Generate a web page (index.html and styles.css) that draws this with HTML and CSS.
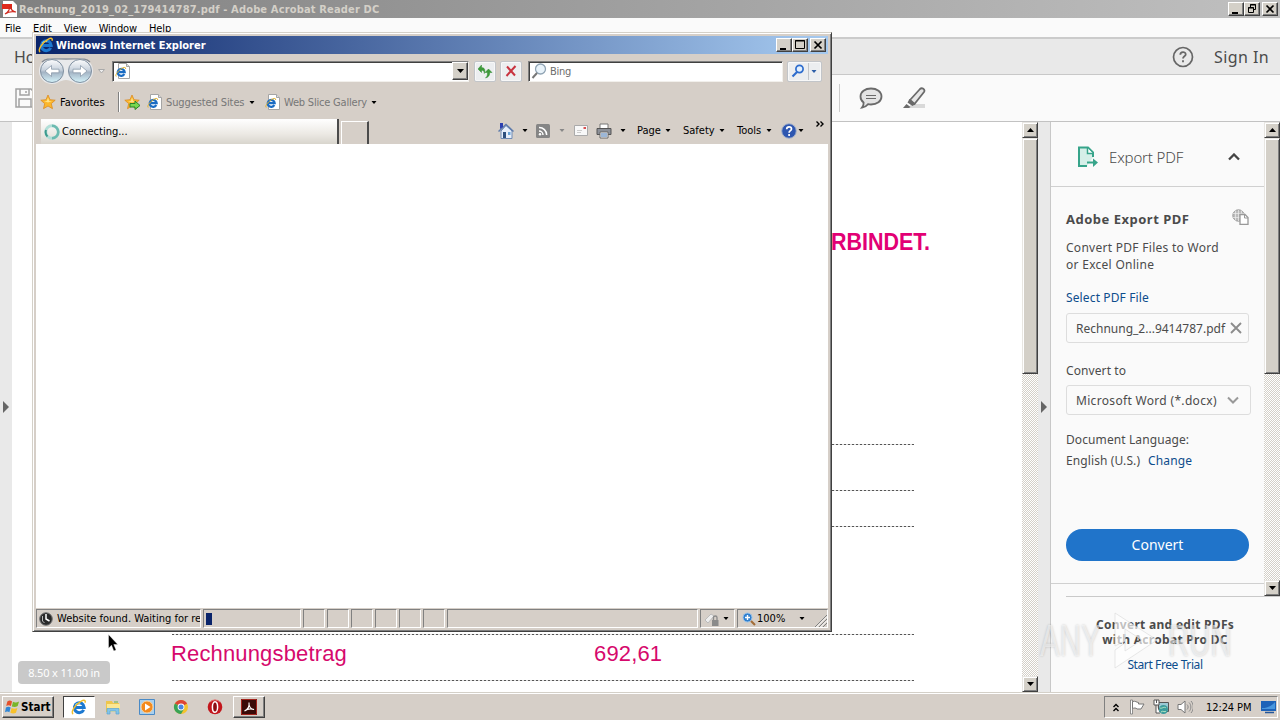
FILE: index.html
```html
<!DOCTYPE html>
<html lang="en">
<head>
    <meta charset="UTF-8">
    <meta name="viewport" content="width=device-width, initial-scale=1.0">
    <title>Desktop</title>
    <link rel="stylesheet" href="styles.css">
</head>
<body>
    <svg class="defs" width="0" height="0">
        <defs>
            <linearGradient id="orb" x1="0" y1="0" x2="0" y2="1">
                <stop offset="0" stop-color="#fdfdfe"/>
                <stop offset=".45" stop-color="#c9d3de"/>
                <stop offset=".55" stop-color="#a3b3c4"/>
                <stop offset="1" stop-color="#d5f3fa"/>
            </linearGradient>
            <symbol id="ie" viewBox="0 0 16 16">
                <path d="M12.700 10.900A4.900 4.900 0 1 1 13.200 8.500H4.500" fill="none" stroke="#1c78d0" stroke-width="3"/>
                <path d="M4.200 6.300a3.900 3.900 0 0 1 5-1.500" fill="none" stroke="#7fd0f8" stroke-width="1.200"/>
                <path d="M2.200 15C-.8 13.600 4 5.500 10 2.300c3.400-1.800 5-.9 4 1.500" fill="none" stroke="#f0bd2c" stroke-width="1.500"/>
            </symbol>
            <symbol id="iepage" viewBox="0 0 16 16">
                <path d="M3.500.5h8l3 3v12h-11z" fill="#fff" stroke="#a5a5a5"/>
                <path d="M11.500.5v3h3" fill="#ddd" stroke="#a5a5a5"/>
                <path d="M9.300 11.100A3.500 3.500 0 1 1 9.700 9.200H4" fill="none" stroke="#1b6cc3" stroke-width="2.200"/>
                <path d="M1.200 13.500C-.5 12 4 6.500 8 4.800c2-.8 3-.3 2.500 1.200" fill="none" stroke="#e2b12a"/>
            </symbol>
            <symbol id="star" viewBox="0 0 16 16">
                <path d="M8 1l2 4.700 5.200.5-3.900 3.400 1.200 5.100L8 12l-4.500 2.700 1.200-5.100L.8 6.200 6 5.700z" fill="#fbb72c" stroke="#dc8c22" stroke-width=".8"/>
                <path d="M8 3.500L9.200 7H12L8 8.500 4 7h2.800z" fill="#ffe388"/>
            </symbol>
            <symbol id="down" viewBox="0 0 7 4"><path d="M0 0h7L3.500 4z" fill="currentColor"/></symbol>
        </defs>
    </svg>

    <div class="desktop">
        <!-- Acrobat -->
        <div class="titlebar">
            <svg class="pdf-icon" viewBox="0 0 16 16"><path d="M1 0h10l4 4v12H1z" fill="#fff"/><path d="M0 3h10v5H0z" fill="#e0281a"/><path d="M3 13c4-2 5-6 5-9M8 4c0 4 3 7 6 7-4-1-8 0-11 2" fill="none" stroke="#d02a20" stroke-width="1.200"/></svg>
            <span class="title-text">Rechnung_2019_02_179414787.pdf - Adobe Acrobat Reader DC</span>
            <div class="win-buttons">
                <b><svg viewBox="0 0 14 12"><path d="M3 9h6v2H3z"/></svg></b><b><svg viewBox="0 0 14 12"><path d="M5.500 4V1.500h5v5H9M5 2h6M3.500 4.500h5v5h-5zM3 5h6" fill="none" stroke="#000"/></svg></b><b class="close"><svg viewBox="0 0 14 12"><path d="M3.500 2.500l7 7M10.500 2.500l-7 7" stroke="#000" stroke-width="1.700"/></svg></b>
            </div>
        </div>
        <div class="menubar"><span>File</span><span>Edit</span><span>View</span><span>Window</span><span>Help</span></div>
        <div class="tabs">
            <span class="home">Home</span>
            <svg class="help" viewBox="0 0 22 22"><circle cx="11" cy="11" r="9.500" fill="none" stroke="#666" stroke-width="1.700"/><path d="M8.300 8.800c0-3.600 5.400-3.500 5.400-.4 0 1.900-2.700 2-2.700 4.200M11 14.300v2" fill="none" stroke="#666" stroke-width="1.800"/></svg>
            <span class="signin">Sign In</span>
        </div>
        <div class="tools">
            <svg class="save" viewBox="0 0 20 20"><path d="M1 1h15l3 3v15H1zM5 1v6h9V1M4 19v-8h12v8M11 3v2" fill="none" stroke="#a2a2a2" stroke-width="1.500"/></svg>
            <i class="divider"></i>
            <svg class="comment" viewBox="0 0 24 22"><path d="M12 1.500c6 0 10.500 3.300 10.500 8S18 17.500 12 17.500c-1 0-2-.1-3-.3-1.500 2-3.500 3-6 3.300 1.300-1.500 1.800-3 1.600-5C2.500 14 1.500 12 1.500 9.500c0-4.700 4.500-8 10.500-8z" fill="#e4e4e4" stroke="#6a6a6a" stroke-width="1.800"/><path d="M7 8.500h10M7 11.500h10" stroke="#6a6a6a"/></svg>
            <svg class="marker" viewBox="0 0 24 22"><path d="M9 17h14v4H7z" fill="#d9d9d9"/><path d="M8 13L18 2c2-2 5.500.5 4 3l-9.500 12z" fill="#e6e6e6" stroke="#6a6a6a" stroke-width="1.800"/><path d="M7.500 12l6 5-3 2-5-3.500z" fill="#6a6a6a"/><path d="M4.500 17l4 3-1.500 1H1z" fill="#6a6a6a"/></svg>
        </div>

        <div class="main">
            <div class="rail rail-left"><svg viewBox="0 0 6 12"><path d="M0 0l6 6-6 6z" fill="#666"/></svg></div>
            <div class="page">
                <div class="slogan">RBINDET.</div>
                <hr class="r1"><hr class="r2"><hr class="r3"><hr class="r4">
                <div class="total"><span>Rechnungsbetrag</span><span>692,61</span></div>
                <hr class="r5">
                <div class="page-size">8.50 x 11.00 in</div>
            </div>
            <div class="scroll">
                <b><svg viewBox="0 0 7 4"><path d="M0 4h7L3.500 0z"/></svg></b>
                <div class="thumb"></div>
                <div class="space"></div>
                <b><svg viewBox="0 0 7 4"><path d="M0 0h7L3.500 4z"/></svg></b>
            </div>
            <div class="rail"><svg viewBox="0 0 6 12"><path d="M0 0l6 6-6 6z" fill="#666"/></svg></div>
            <div class="side">
                <div class="side-top">
                    <div class="panel">
                        <div class="panel-head">
                            <svg class="export" viewBox="0 0 22 22"><path d="M10 20H2V1.500h9l5 5V11" fill="#d5efe8" stroke="#36a48a" stroke-width="2"/><path d="M10.500 2v5.500H16" fill="#fff" stroke="#36a48a" stroke-width="1.500"/><path d="M10 16.500h8" stroke="#36a48a" stroke-width="2"/><path d="M16 12.500l5 4-5 4.500z" fill="#36a48a"/></svg>
                            <span>Export PDF</span>
                            <svg class="chev" viewBox="0 0 12 8"><path d="M1 6.500l5-5 5 5" fill="none" stroke="#444" stroke-width="2.300"/></svg>
                        </div>
                        <div class="panel-body">
                            <div class="heading"><span>Adobe Export PDF</span>
                                <svg viewBox="0 0 17 16"><circle cx="6.500" cy="6.500" r="5.700" fill="#bbb" stroke="#999"/><path d="M1 4.500h11M1 8.500h11M6.500 1v11M3.500 1.500v10M9.500 1.500v10" stroke="#eee" stroke-width=".7"/><path d="M8 5.500h5l3 3v7H8z" fill="#fff" stroke="#999" stroke-width="1.300"/><path d="M12.500 6v3H16" fill="none" stroke="#999"/></svg>
                            </div>
                            <p class="desc">Convert PDF Files to Word<br>or Excel Online</p>
                            <a class="select-file">Select PDF File</a>
                            <div class="field file"><span>Rechnung_2...9414787.pdf</span><svg viewBox="0 0 12 12"><path d="M1 1l10 10M11 1L1 11" stroke="#8c8c8c" stroke-width="1.900"/></svg></div>
                            <div class="label">Convert to</div>
                            <div class="field format"><span>Microsoft Word (*.docx)</span><svg viewBox="0 0 12 8"><path d="M1 1.500l5 5 5-5" fill="none" stroke="#999" stroke-width="2"/></svg></div>
                            <div class="label lang">Document Language:</div>
                            <div class="lang-value"><span>English (U.S.)</span><a>Change</a></div>
                            <div class="convert">Convert</div>
                        </div>
                    </div>
                    <div class="scroll">
                        <b><svg viewBox="0 0 7 4"><path d="M0 4h7L3.500 0z"/></svg></b>
                        <div class="thumb"></div>
                        <div class="space"></div>
                        <b><svg viewBox="0 0 7 4"><path d="M0 0h7L3.500 4z"/></svg></b>
                    </div>
                </div>
                <div class="promo">
                    <strong>Convert and edit PDFs<br>with Acrobat Pro DC</strong>
                    <a>Start Free Trial</a>
                </div>
            </div>
        </div>

        <div class="taskbar">
            <div class="start">
                <svg viewBox="0 0 16 16"><path d="M2.500 2c2-1.200 3.500-1 5 0L6.300 7c-1.600-1-3.300-1-5 0z" fill="#e5502a"/><path d="M8.500 2.500c2 1 3.500 1 6.500-.5L13.500 7c-2 1.200-4 1.200-6.200.5z" fill="#79b529"/><path d="M1 8.500c1.800-1 3.300-1 5 0l-1.300 5c-1.600-1-3-1-4.700 0z" fill="#2f86d6"/><path d="M7 9c2 1 4 1 6.200 0l-1.500 5c-2 1.200-4 1-6 0z" fill="#f8c12b"/></svg>
                <span>Start</span>
            </div>
            <div class="task active"><svg viewBox="0 0 16 16"><use href="#ie"/></svg></div>
            <div class="task"><svg viewBox="0 0 16 16"><path d="M1 2h6l1 2h6v9H1z" fill="#eec64d"/><path d="M2 5h13v8H2z" fill="#fbe793"/><path d="M2 15V9.500h12V15h-3v-3H5v3z" fill="#83c4e8" stroke="#5aa5d2" stroke-width=".7"/><path d="M9 3h4" stroke="#65b34a"/></svg></div>
            <div class="task"><svg viewBox="0 0 16 16"><path d="M.5.500h15v15H.5z" fill="#a9d0ee" stroke="#4a8ac6"/><circle cx="8" cy="8" r="6" fill="#f38a1d" stroke="#fbd29c"/><path d="M6 4.500L11.500 8 6 11.500z" fill="#fff"/></svg></div>
            <div class="task"><svg viewBox="0 0 16 16"><circle cx="8" cy="8" r="7" fill="#f3c32e"/><path d="M8 8L1.900 4.500A7 7 0 0 1 14.100 4.500z" fill="#dd4535"/><path d="M8 8L1.900 4.500A7 7 0 0 0 8 15l3-5z" fill="#3aa356"/><circle cx="8" cy="8" r="3.400" fill="#fff"/><circle cx="8" cy="8" r="2.500" fill="#4a86e0"/></svg></div>
            <div class="task"><svg viewBox="0 0 16 16"><circle cx="8" cy="8" r="7.300" fill="#c3161c"/><path d="M3 3a7 7 0 0 1 10 0" fill="none" stroke="#e8807c"/><ellipse cx="8" cy="8" rx="2.600" ry="5.300" fill="#8d0d12" stroke="#fff" stroke-width="1.500"/></svg></div>
            <div class="task open"><svg viewBox="0 0 16 16"><path d="M0 0h16v16H0z" fill="#3a0b08"/><path d="M.5.500h15v15H.5z" fill="none" stroke="#a2231c"/><path d="M3.500 12c3.500-1.500 5-5 4.500-8.500C7.500 7.500 10 10.500 13 10.500c-3-1-7-.3-9.500 1.500z" fill="none" stroke="#fff" stroke-width="1.100"/></svg></div>
            <div class="tray">
                <svg class="t-chev" viewBox="0 0 6 9"><path d="M.5 4L3 1.500 5.500 4M.5 8L3 5.500 5.500 8" fill="none" stroke="#000" stroke-width="1.400"/></svg>
                <svg class="t-flag" viewBox="0 0 16 16"><path d="M1.500 1v14h2V1z" fill="#fff" stroke="#777" stroke-width=".8"/><path d="M3.500 2.500c3-1 4 1 6 1v1.500h5.500l-3 5H8c-1-1.500-3-1-4.500-.5z" fill="#fff" stroke="#777"/></svg>
                <svg class="t-net" viewBox="0 0 16 16"><path d="M5.500 3.500h10v9h-10z" fill="#9ac9d4" stroke="#555"/><path d="M1 1h5v5H1zM3.500 1v3M3 6v8h4" fill="#fff" stroke="#555"/><circle cx="10.500" cy="10.500" r="4.500" fill="#3b9b9b"/><path d="M7 9c2 1 4-2 6 0M8 13c2-2 4 1 5-1" stroke="#b5e6c2" fill="none"/></svg>
                <svg class="t-vol" viewBox="0 0 16 16"><path d="M1 5.500h3L8 2v12l-4-3.500H1z" fill="#fff" stroke="#777"/><path d="M10 5.500c1.500 1.500 1.500 3.500 0 5M12 3.500c2.500 2.500 2.500 6.500 0 9M14 2c3 3.500 3 8.500 0 12" fill="none" stroke="#888"/></svg>
                <span>12:24 PM</span>
                <svg class="t-desk" viewBox="0 0 15 14"><path d="M0 1h15v10H0z" fill="#1d62b8"/><path d="M1 8c5 0 10-2 13-6v7H1z" fill="#4896de"/><path d="M4 12.500h9" stroke="#24569a" stroke-width="1.500"/></svg>
            </div>
        </div>

        <!-- Internet Explorer -->
        <div class="ie">
            <div class="ie-title">
                <svg viewBox="0 0 16 16"><use href="#ie"/></svg>
                <span>Windows Internet Explorer</span>
                <div class="win-buttons">
                    <b><svg viewBox="0 0 14 12"><path d="M3 9h6v2H3z"/></svg></b><b><svg viewBox="0 0 14 12"><path d="M2.500 1.500h9v8h-9zM2 2h10" fill="none" stroke="#000"/></svg></b><b class="close"><svg viewBox="0 0 14 12"><path d="M3.500 2.500l7 7M10.500 2.500l-7 7" stroke="#000" stroke-width="1.700"/></svg></b>
                </div>
            </div>
            <div class="address-row">
                <svg class="nav" viewBox="0 0 56 28">
                    <path d="M14 1h28a13 13 0 0 1 0 26c-6 0-8-4-14-4s-8 4-14 4a13 13 0 0 1 0-26z" fill="#e9eaec"/>
                    <path d="M4 5c4-4 8-3 24-3s20-1 24 3" fill="none" stroke="#858a92" stroke-width="1.300"/>
                    <circle cx="14" cy="14" r="11.500" fill="url(#orb)" stroke="#7f8fa0"/>
                    <circle cx="42" cy="14" r="11.500" fill="url(#orb)" stroke="#7f8fa0"/>
                    <path d="M7 14l6.500-5.500v3.700H21v3.600h-7.500v3.700zM49 14l-6.500-5.500v3.700H35v3.600h7.500v3.700z" fill="#fff" stroke="#8b9aab" stroke-width=".8"/>
                </svg>
                <svg class="recent" viewBox="0 0 7 5"><path d="M.5.500h6L3.500 4z" fill="#eee" stroke="#aaa"/></svg>
                <div class="address"><svg viewBox="0 0 16 16"><use href="#iepage"/></svg><b><svg viewBox="0 0 7 4"><use href="#down"/></svg></b></div>
                <div class="tool-btn refresh"><svg viewBox="0 0 16 16"><path d="M4.500 2L1 6l3.500 3.500v-2.300c2 0 2.800.8 2.800 3.300 1.200-3.500.5-5.700-2.800-6z" fill="#3d9b3a" stroke="#2f8a30" stroke-width=".5"/><path d="M11.500 6L15 9.500h-2.300c0 3-1 4.500-4.200 5.500 1.700-1.500 2-2.800 2-5.500H8z" fill="#3d9b3a" stroke="#2f8a30" stroke-width=".5"/></svg></div>
                <div class="tool-btn stop"><svg viewBox="0 0 14 14"><path d="M3 2.500l8 9M11.500 2L2.500 12" stroke="#c83440" stroke-width="2"/></svg></div>
                <div class="search"><svg viewBox="0 0 16 16"><circle cx="9.500" cy="6" r="5" fill="#e9f3fa" stroke="#8fa3b3" stroke-width="1.300"/><path d="M6 10l-4.500 5" stroke="#777" stroke-width="2"/></svg><span>Bing</span></div>
                <div class="tool-btn go"><svg viewBox="0 0 14 14"><circle cx="8.500" cy="5" r="3.600" fill="#e2f0ff" stroke="#2d6ccd" stroke-width="1.700"/><path d="M6 8l-4.500 4.500" stroke="#2d6ccd" stroke-width="2.200"/></svg><svg class="go-down" viewBox="0 0 7 4"><use href="#down"/></svg></div>
            </div>
            <div class="fav-row">
                <svg class="i16" viewBox="0 0 16 16"><use href="#star"/></svg>
                <span class="favorites">Favorites</span>
                <i></i>
                <svg class="i16" viewBox="0 0 16 16"><use href="#star"/><path d="M6 9.500h5V7l5 4.500-5 4V13H6z" fill="#79d84f" stroke="#27852a"/></svg>
                <svg class="i16 p1" viewBox="0 0 16 16"><use href="#iepage"/></svg>
                <span class="sites">Suggested Sites</span><svg class="dd" viewBox="0 0 7 4"><use href="#down"/></svg>
                <svg class="i16 p2" viewBox="0 0 16 16"><use href="#iepage"/></svg>
                <span class="gallery">Web Slice Gallery</span><svg class="dd" viewBox="0 0 7 4"><use href="#down"/></svg>
            </div>
            <div class="tab-row">
                <div class="tab"><svg viewBox="0 0 16 16"><circle cx="8" cy="8" r="6.300" fill="none" stroke="#b1ded7" stroke-width="3"/><path d="M8 1.700a6.300 6.300 0 0 1 0 12.600" fill="none" stroke="#6dbab0" stroke-width="2.500"/><path d="M2 6a6.300 6.300 0 0 0 1.500 6.500" fill="none" stroke="#3d9a8d" stroke-width="2"/></svg><span>Connecting...</span></div>
                <div class="new-tab"></div>
                <div class="commands">
                    <svg class="i16 c-home" viewBox="0 0 16 16"><path d="M3 8v7.500h11V8L8 2.500z" fill="#e6eefa" stroke="#6f8bb5"/><path d="M.5 8.500L8 1.500l7.500 7" fill="none" stroke="#5f7cab" stroke-width="1.500"/><path d="M2 0h3v4L2 6z" fill="#2b3fb0"/><path d="M5 9h3v6H5z" fill="#2d507e"/><path d="M10 9h2.500v3H10z" fill="#6aa5d8"/></svg>
                    <svg class="dd d1" viewBox="0 0 7 4"><use href="#down"/></svg>
                    <svg class="c-rss" viewBox="0 0 14 14"><rect width="14" height="14" rx="1.500" fill="#858585"/><path d="M3 7a4 4 0 0 1 4 4M3 3.500A7.500 7.500 0 0 1 10.700 11" fill="none" stroke="#fff" stroke-width="1.500"/><circle cx="4" cy="10.300" r="1.200" fill="#fff"/></svg>
                    <svg class="dd d2" viewBox="0 0 7 4"><use href="#down"/></svg>
                    <svg class="c-mail" viewBox="0 0 14 11"><path d="M.5.500h13v10H.5z" fill="#f8f8f8" stroke="#aaa"/><path d="M9.500 2h2.500v2H9.500z" fill="#d85050"/><path d="M3 5.500h5M3 7.500h4" stroke="#ccc"/></svg>
                    <svg class="i16 c-print" viewBox="0 0 16 16"><path d="M4 1h8v5H4z" fill="#fff" stroke="#777"/><path d="M1 5.500h14v6H1z" fill="#8c9098" stroke="#555"/><path d="M4 9h8v6H4z" fill="#fff" stroke="#666"/><path d="M5 11h6M5 13h6" stroke="#3a6fae"/></svg>
                    <svg class="dd d3" viewBox="0 0 7 4"><use href="#down"/></svg>
                    <span class="m-page">Page</span><svg class="dd" viewBox="0 0 7 4"><use href="#down"/></svg>
                    <span class="m-safety">Safety</span><svg class="dd" viewBox="0 0 7 4"><use href="#down"/></svg>
                    <span class="m-tools">Tools</span><svg class="dd" viewBox="0 0 7 4"><use href="#down"/></svg>
                    <svg class="i16 c-help" viewBox="0 0 16 16"><circle cx="8" cy="8" r="7.300" fill="#2e56b0" stroke="#a5b2cb"/><path d="M5.700 6.300c0-3.300 4.800-3 4.800-.3 0 1.700-2.400 1.700-2.400 3.800M8.100 11v2" fill="none" stroke="#fff" stroke-width="1.700"/></svg><svg class="dd" viewBox="0 0 7 4"><use href="#down"/></svg>
                    <svg class="more" viewBox="0 0 8 6"><path d="M.5.500L3 3 .5 5.500M4.500.500L7 3 4.500 5.500" fill="none" stroke="#000" stroke-width="1.400"/></svg>
                </div>
            </div>
            <div class="viewport"></div>
            <div class="status">
                <div class="cell msg"><svg viewBox="0 0 14 14"><circle cx="7" cy="7" r="6.300" fill="#292929" stroke="#777"/><path d="M7 2v5l3.500 2" fill="none" stroke="#fff" stroke-width="1.500"/><path d="M3.500 4v5l2 2" fill="none" stroke="#bbb"/></svg><span>Website found. Waiting for re</span></div>
                <div class="cell progress"><i></i></div>
                <div class="cell s"></div><div class="cell s"></div><div class="cell s"></div><div class="cell s"></div><div class="cell s"></div><div class="cell s"></div>
                <div class="cell zone"></div>
                <div class="cell lock"><svg class="i16" viewBox="0 0 16 16"><path d="M1 9l6-6 3 2-6 7z" fill="#eee" stroke="#bbb"/><path d="M8 9h6.500v6H8z" fill="#8b8b8b"/><path d="M9.500 9V6.500c0-2 3.500-2 3.500 0V9" fill="none" stroke="#8b8b8b" stroke-width="1.300"/></svg><svg class="dd" viewBox="0 0 7 4"><use href="#down"/></svg></div>
                <div class="cell zoom"><svg class="i16" viewBox="0 0 14 14"><circle cx="5.500" cy="5.500" r="4.500" fill="#2f7fce" stroke="#9cc5ec"/><path d="M3 5.500h5M5.500 3v5" stroke="#fff" stroke-width="1.400"/><path d="M9 9l4 4" stroke="#a36d37" stroke-width="2.200"/></svg><span>100%</span><svg class="dd" viewBox="0 0 7 4"><use href="#down"/></svg></div>
                <svg class="grip" viewBox="0 0 12 12"><path d="M0 12L12 0M4 12l8-8M8 12l4-4" stroke="#808080"/><path d="M1.500 12L12 1.500M5.500 12L12 5.500" stroke="#fff"/></svg>
            </div>
        </div>

        <div class="watermark">
            <span>ANY</span>
            <svg viewBox="0 0 56 62"><path d="M9 3l42 27L9 58V40l10-7v8l17-11-17-11v12L9 36z" fill="#fff" fill-opacity=".65" stroke="#ddd" stroke-opacity=".7"/></svg>
            <span>RUN</span>
        </div>
        <svg class="cursor" viewBox="0 0 10 18"><path d="M.5.500v13.700l3-3 2.300 5.800 2.300-1-2.300-5.500h4z" fill="#000" stroke="#fff" stroke-width=".4"/></svg>
    </div>
</body>
</html>
```

FILE: styles.css
```css
* {
    box-sizing: border-box;
}
body {
    margin: 0;
    overflow: hidden;
    font-family: "DejaVu Sans Condensed", "DejaVu Sans", sans-serif;
    font-stretch: condensed;
    font-size: 11px;
    color: #000;
}
svg {
    display: block;
    flex: none;
}
span, a, strong {
    white-space: nowrap;
}
.defs {
    position: absolute;
}
.desktop {
    position: relative;
    width: 1280px;
    height: 720px;
    display: flex;
    flex-direction: column;
    overflow: hidden;
    background: #fafafa;
}

/* Acrobat */
.titlebar {
    height: 18px;
    flex: none;
    display: flex;
    align-items: center;
    padding: 0 2px;
    background: linear-gradient(90deg, #808080, #c0c0c0);
}
.pdf-icon {
    width: 16px;
    height: 16px;
}
.title-text {
    margin-left: 1px;
    color: #d4d0c8;
    font-weight: bold;
    letter-spacing: .16px;
}
.win-buttons {
    margin-left: auto;
    display: flex;
}
.win-buttons b {
    width: 16px;
    height: 14px;
    background: #d4d0c8;
    border: 1px solid;
    border-color: #fff #404040 #404040 #fff;
    box-shadow: inset -1px -1px #808080;
}
.win-buttons .close {
    margin-left: 2px;
}
.win-buttons svg {
    width: 14px;
    height: 12px;
}
.menubar {
    height: 21px;
    flex: none;
    display: flex;
    gap: 12px;
    padding: 4px 5px 0;
    border-bottom: 2px solid #cbcbcb;
    background: #fafafa;
    letter-spacing: -.12px;
}
.tabs {
    height: 36px;
    flex: none;
    display: flex;
    align-items: center;
    padding: 0 11px 0 14px;
    background: #e9e9e9;
    border-bottom: 1px solid #c8c8c8;
    font-family: "Noto Sans", sans-serif;
    font-size: 16px;
    color: #4b4b4b;
}
.help {
    width: 22px;
    height: 22px;
    margin-left: auto;
    margin-right: 20px;
}
.signin {
    letter-spacing: .4px;
}
.tools {
    height: 47px;
    flex: none;
    display: flex;
    align-items: center;
    padding-left: 15px;
    border-bottom: 1px solid #c2c2c2;
}
.save {
    width: 20px;
    height: 20px;
}
.divider {
    width: 1px;
    height: 28px;
    margin-left: 804px;
    background: #ccc;
}
.comment {
    width: 24px;
    height: 22px;
    margin-left: 19px;
}
.marker {
    width: 24px;
    height: 22px;
    margin-left: 19px;
}
.main {
    height: 570px;
    flex: none;
    display: grid;
    grid-template-columns: 12px 1010px 16px 12px 230px;
}
.rail {
    background: #e9e9e9;
    padding: 279px 0 0 3px;
}
.rail svg {
    width: 6px;
    height: 12px;
}
.page {
    position: relative;
    height: 570px;
    padding: 106px 108px 0 160px;
    background: #fff;
    font-family: "Liberation Sans", sans-serif;
    color: #d6096c;
}
.page hr {
    height: 1px;
    margin: 0;
    border: 0;
    background: repeating-linear-gradient(90deg, #555 0 2px, #ddd 2px 4px);
}
.slogan {
    height: 27px;
    margin-left: 659px;
    font-size: 24px;
    line-height: 27px;
    font-weight: bold;
    color: #e20074;
    transform: scaleX(.895);
    transform-origin: left;
}
.page .r1 { margin-top: 189px; }
.page .r2 { margin-top: 45px; }
.page .r3 { margin-top: 35px; }
.page .r4 { margin-top: 107px; }
.total {
    height: 45px;
    display: flex;
    padding-top: 6px;
    font-size: 22px;
    line-height: 26px;
    letter-spacing: .15px;
}
.total span:first-child {
    width: 423px;
    margin-left: -1px;
}
.page-size {
    position: absolute;
    left: 6px;
    bottom: 8px;
    width: 92px;
    height: 23px;
    border-radius: 4px;
    background: #c9c9c9;
    color: #fff;
    font: 11px/23px "Noto Sans", sans-serif;
    letter-spacing: -.15px;
    text-align: center;
}
.scroll {
    width: 16px;
    display: flex;
    flex-direction: column;
    background: repeating-conic-gradient(#d4d0c8 0 25%, #fff 0 50%) 0 0/2px 2px;
}
.scroll b, .thumb {
    background: #d4d0c8;
    border: 1px solid;
    border-color: #e8e6e2 #404040 #404040 #e8e6e2;
    box-shadow: inset 1px 1px #fff, inset -1px -1px #808080;
}
.scroll b {
    height: 16px;
    display: flex;
    align-items: center;
    justify-content: center;
}
.scroll b svg {
    width: 7px;
    height: 4px;
}
.thumb {
    height: 236px;
}
.space {
    flex: 1;
}
.side {
    width: 230px;
    background: #fafafa;
    border-left: 1px solid #c8c8c8;
    font-family: "Noto Sans", sans-serif;
    color: #4b4b4b;
}
.side-top {
    height: 474px;
    display: flex;
}
.panel {
    width: 213px;
}
.side a {
    color: #0d4d8c;
}
.panel-head {
    height: 65px;
    display: flex;
    align-items: center;
    padding: 5px 24px 0 26px;
    border-bottom: 1px solid #d0d0d0;
    font-size: 15px;
    font-weight: 300;
    letter-spacing: -.15px;
}
.export {
    width: 22px;
    height: 22px;
    margin-right: 10px;
}
.chev {
    width: 12px;
    height: 8px;
    margin-left: auto;
}
.panel-body {
    height: 397px;
    padding: 22px 15px 0;
    border-bottom: 1px solid #d0d0d0;
    font-size: 12px;
    line-height: 17px;
}
.heading {
    height: 20px;
    display: flex;
    font-size: 13px;
    line-height: 20px;
    font-weight: bold;
    letter-spacing: .5px;
    justify-content: space-between;
}
.heading svg {
    width: 17px;
    height: 16px;
}
.desc {
    margin: 10px 0 16px;
    letter-spacing: .28px;
}
.select-file {
    display: block;
    letter-spacing: .13px;
}
.field {
    width: 183px;
    height: 30px;
    display: flex;
    align-items: center;
    padding: 0 6px 0 9px;
    border: 1px solid #ddd;
    border-radius: 3px;
}
.file {
    margin-top: 7px;
}
.field svg {
    width: 12px;
    height: 12px;
    margin-left: auto;
}
.label {
    margin-top: 19px;
    letter-spacing: .1px;
}
.format {
    width: 185px;
    margin-top: 6px;
    padding-right: 11px;
    letter-spacing: .32px;
}
.format svg {
    height: 8px;
}
.lang {
    margin-top: 16px;
}
.lang-value {
    margin-top: 4px;
    display: flex;
    gap: 8px;
    letter-spacing: .1px;
}
.convert {
    width: 183px;
    height: 32px;
    margin-top: 60px;
    border-radius: 16px;
    background: #2074ca;
    color: #fff;
    font-size: 14px;
    line-height: 31px;
    text-align: center;
}
.promo {
    margin-left: 15px;
    padding: 20px 16px 0 0;
    border-top: 1px solid #c9c9c9;
    display: flex;
    flex-direction: column;
    align-items: center;
    font-size: 12px;
    line-height: 15px;
    text-align: center;
}
.promo strong {
    letter-spacing: .3px;
}
.promo a {
    margin-top: 10px;
    letter-spacing: -.4px;
}

/* Taskbar */
.taskbar {
    height: 28px;
    flex: none;
    display: flex;
    align-items: center;
    padding: 2px 2px 0;
    background: #d6cfc8;
    box-shadow: inset 0 1px #d4d0c8, inset 0 2px #fff;
}
.start, .task.open {
    border: 1px solid;
    border-color: #fff #404040 #404040 #fff;
    box-shadow: inset -1px -1px #808080;
}
.start {
    width: 52px;
    height: 22px;
    margin-right: 9px;
    display: flex;
    align-items: center;
    padding-left: 2px;
    font-size: 11.500px;
    font-weight: bold;
}
.start svg {
    width: 15px;
    height: 16px;
    margin-right: 1px;
}
.task {
    width: 32px;
    height: 22px;
    margin-right: 2px;
    display: flex;
    align-items: center;
    justify-content: center;
}
.task svg {
    width: 16px;
    height: 16px;
}
.task.active {
    background: #fff;
    border: 1px solid;
    border-color: #404040 #fff #fff #404040;
}
.tray {
    width: 174px;
    height: 22px;
    margin-left: auto;
    display: flex;
    align-items: center;
    padding-left: 8px;
    border: 1px solid;
    border-color: #808080 #fff #fff #808080;
}
.t-chev {
    width: 6px;
    height: 9px;
}
.t-flag {
    width: 16px;
    height: 16px;
    margin-left: 10px;
}
.t-net {
    width: 16px;
    height: 16px;
    margin-left: 8px;
}
.t-vol {
    width: 16px;
    height: 16px;
    margin-left: 8px;
}
.tray span {
    margin-left: 13px;
    letter-spacing: -.1px;
}
.t-desk {
    width: 15px;
    height: 14px;
    margin-left: auto;
    margin-right: 1px;
}

/* Internet Explorer */
.ie {
    position: absolute;
    left: 32px;
    top: 32px;
    width: 800px;
    height: 600px;
    padding: 3px;
    display: flex;
    flex-direction: column;
    background: #d6cfc8;
    border: 1px solid;
    border-color: #d4d0c8 #404040 #404040 #d4d0c8;
    box-shadow: inset 1px 1px #fff, inset -1px -1px #808080;
}
.ie-title {
    height: 18px;
    display: flex;
    align-items: center;
    padding: 0 2px;
    background: linear-gradient(90deg, #0a246a, #a6caf0);
    color: #fff;
    font-weight: bold;
}
.ie-title > svg {
    width: 16px;
    height: 16px;
    margin-right: 2px;
}
.address-row {
    height: 34px;
    display: flex;
    align-items: center;
    padding-left: 2px;
}
.nav {
    width: 56px;
    height: 28px;
}
.recent {
    width: 7px;
    height: 5px;
    margin: 0 7px 0 4px;
}
.address, .search {
    height: 21px;
    display: flex;
    align-items: center;
    background: #fff;
    border: 1px solid;
    border-color: #808080 #f2f0ec #f2f0ec #808080;
    box-shadow: inset 1px 1px #404040;
}
.address {
    width: 357px;
    padding-left: 2px;
}
.address > svg {
    width: 16px;
    height: 16px;
}
.address b {
    width: 16px;
    height: 18px;
    margin-left: auto;
    display: flex;
    align-items: center;
    justify-content: center;
    background: #d4d0c8;
    border: 1px solid;
    border-color: #fff #404040 #404040 #fff;
    box-shadow: inset -1px -1px #808080;
}
.address b svg {
    width: 7px;
    height: 4px;
}
.tool-btn {
    width: 22px;
    height: 21px;
    display: flex;
    align-items: center;
    justify-content: center;
    background: #eceef0;
    border: 1px solid #c2c5c9;
    border-radius: 2px;
    box-shadow: inset 0 0 0 1px #f8f8f8;
}
.tool-btn svg {
    width: 16px;
    height: 16px;
}
.refresh {
    margin-left: 5px;
}
.stop {
    margin-left: 4px;
}
.tool-btn.stop svg {
    width: 14px;
    height: 14px;
}
.search {
    width: 255px;
    margin-left: 6px;
    padding-left: 2px;
    color: #6d6d6d;
}
.search svg {
    width: 16px;
    height: 16px;
    margin-right: 3px;
}
.search span {
    letter-spacing: -.3px;
}
.go {
    width: 35px;
    margin-left: 4px;
    justify-content: flex-start;
    padding-left: 3px;
    background: linear-gradient(90deg, #eceef0 20px, #c2c5c9 20px 21px, #eceef0 21px);
}
.tool-btn.go svg {
    width: 14px;
    height: 14px;
}
.tool-btn.go .go-down {
    width: 6px;
    height: 3px;
    margin-left: 6px;
    color: #2d5fa8;
}
.fav-row {
    height: 30px;
    display: flex;
    align-items: center;
    padding: 0 0 2px 4px;
    color: #777;
}
.i16 {
    width: 16px;
    height: 16px;
}
.fav-row i {
    width: 2px;
    height: 20px;
    margin-right: 4px;
    border-left: 1px solid #808080;
    border-right: 1px solid #fff;
}
.favorites {
    width: 58px;
    margin-left: 4px;
    color: #000;
}
.p1 { margin-left: 7px; }
.p2 { margin-left: 10px; }
.sites {
    width: 80px;
    margin-left: 3px;
    letter-spacing: -.1px;
}
.gallery {
    width: 84px;
    margin-left: 3px;
    letter-spacing: -.2px;
}
.dd {
    width: 6px;
    height: 3px;
    margin-left: 3px;
    color: #000;
}
.tab-row {
    height: 26px;
    display: flex;
    align-items: flex-end;
    padding-left: 5px;
}
.tab {
    width: 298px;
    height: 25px;
    display: flex;
    align-items: center;
    padding-left: 3px;
    background: linear-gradient(#fff, #ece9e4 60%, #d8d5cd);
    border-right: 2px solid #4b4b4b;
}
.tab svg {
    width: 16px;
    height: 16px;
    margin-right: 2px;
}
.new-tab {
    width: 28px;
    height: 23px;
    margin-left: 2px;
    border: 1px solid #fff;
    border-right: 2px solid #4b4b4b;
    border-bottom: 0;
}
.commands {
    height: 26px;
    margin-left: 129px;
    padding-bottom: 1px;
    display: flex;
    align-items: center;
}
.commands .d1 { margin-left: 8px; }
.commands .c-rss { width: 14px; height: 14px; margin-left: 8px; }
.commands .d2 { margin-left: 9px; color: #888; }
.commands .c-mail { width: 14px; height: 11px; margin-left: 9px; }
.c-print { margin-left: 8px; }
.commands .d3 { margin-left: 8px; }
.m-page { width: 25px; margin-left: 11px; }
.m-safety { width: 33px; margin-left: 12px; }
.m-tools { width: 26px; margin-left: 12px; }
.c-help { margin-left: 9px; }
.commands .dd:nth-last-child(2) { margin-left: 1px; }
.more {
    width: 8px;
    height: 6px;
    margin: 0 0 13px 12px;
}
.viewport {
    flex: 1;
    background: #fff;
}
.status {
    height: 20px;
    position: relative;
    display: flex;
    align-items: flex-end;
    gap: 2px;
}
.cell {
    height: 19px;
    display: flex;
    align-items: center;
    overflow: hidden;
    border: 1px solid;
    border-color: #808080 #fff #fff #808080;
}
.msg {
    width: 165px;
    padding-left: 2px;
}
.msg svg {
    width: 14px;
    height: 14px;
    margin-right: 4px;
}
.progress {
    width: 98px;
    padding-left: 2px;
}
.progress i {
    width: 6px;
    height: 12px;
    background: #0a246a;
}
.s { width: 22px; }
.zone { width: 251px; }
.lock {
    width: 35px;
    padding-left: 3px;
}
.zoom {
    flex: 1;
    padding-left: 4px;
}
.zoom svg.i16 {
    width: 14px;
    height: 14px;
}
.zoom span {
    margin-left: 1px;
}
.zoom .dd {
    margin-left: 14px;
}
.grip {
    position: absolute;
    right: 1px;
    bottom: 1px;
    width: 12px;
    height: 12px;
}

.watermark {
    position: absolute;
    left: 1040px;
    top: 610px;
    height: 62px;
    display: flex;
    align-items: center;
    color: rgba(255, 255, 255, .55);
    font: 44px/62px "Liberation Sans", sans-serif;
    text-shadow: 0 0 3px rgba(0, 0, 0, .2);
}
.watermark span {
    width: 66px;
    transform: scaleX(.67);
    transform-origin: left;
}
.watermark svg {
    width: 56px;
    height: 62px;
    margin-right: 6px;
}
.cursor {
    position: absolute;
    left: 108px;
    top: 634px;
    width: 10px;
    height: 18px;
}
```
